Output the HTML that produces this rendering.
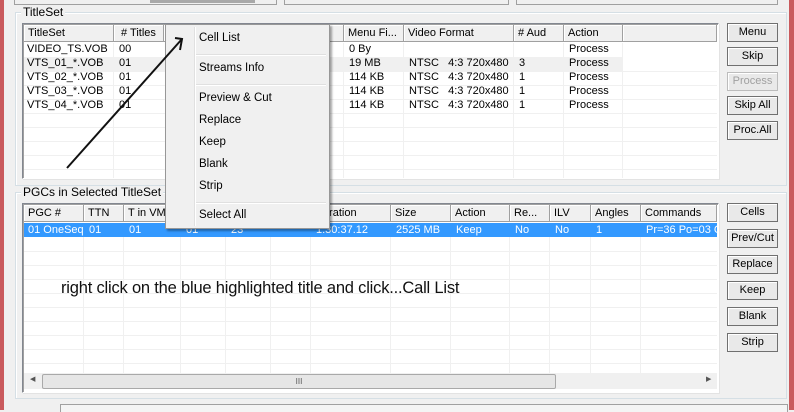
<!DOCTYPE html>
<html><head><style>
*{box-sizing:border-box;margin:0;padding:0}
body{width:794px;height:410px;background:#f0f0f0;font-family:"Liberation Sans",Arial,sans-serif;font-size:11px;color:#000;position:relative;overflow:hidden}
.a{position:absolute}
.grp{position:absolute;border:1px solid #d5dfe5;box-shadow:inset 1px 1px 0 #fff}
.lbl{position:absolute;background:#f0f0f0;padding:0 2px;font-size:12px;line-height:13px;color:#000}
.list{position:absolute;background:#fff;border:1px solid #828790;border-right-color:#fff;border-bottom-color:#fff;box-shadow:inset 1px 1px 0 #a0a0a0, 1px 1px 0 #e3e3e3}
.hd{position:absolute;top:1px;height:17px;border-right:1px solid #a0a0a0;border-bottom:1px solid #a0a0a0;background:#f0f0f0;box-shadow:inset 1px 1px 0 #fff;padding:2px 0 0 4px;white-space:nowrap;overflow:hidden;font-size:11px}
.c{position:absolute;white-space:nowrap;overflow:hidden;padding-left:4px;font-size:11px;height:14px;line-height:14px}
.vl{position:absolute;width:1px;background:#f0f0f0}
.hl{position:absolute;height:1px;background:#f0f0f0}
.btn{position:absolute;left:727px;width:51px;height:19px;border:1px solid #707070;background:#e9e9e9;text-align:center;line-height:17px;font-size:11px;box-shadow:inset 1px 1px 0 #fff}
.menu{position:absolute;left:165px;top:24px;width:165px;height:205px;background:#f0f0f0;border:1px solid #979797;box-shadow:2px 2px 2px rgba(0,0,0,.35)}
.mi{position:absolute;left:33px;font-size:11.5px}
.sep{position:absolute;left:30px;right:3px;height:2px;border-top:1px solid #e0e0e0;border-bottom:1px solid #fff}
</style></head><body>
<div class="a" style="left:0;top:0;width:4px;height:410px;background:#c95a5d"></div>
<div class="a" style="left:789px;top:0;width:5px;height:410px;background:#c95a5d"></div>
<div class="a" style="left:14px;top:0;width:263px;height:5px;border:1px solid #a0a0a0;border-top:none"></div>
<div class="a" style="left:150px;top:0;width:105px;height:3px;background:#a8a8a8"></div>
<div class="a" style="left:284px;top:0;width:225px;height:5px;border:1px solid #a0a0a0;border-top:none"></div>
<div class="a" style="left:516px;top:0;width:262px;height:5px;border:1px solid #a0a0a0;border-top:none"></div>

<div class="grp" style="left:15px;top:12px;width:772px;height:174px"></div>
<div class="lbl" style="left:21px;top:6px">TitleSet</div>
<div class="list" style="left:22px;top:23px;width:697px;height:156px">
 <div class="hd" style="left:1px;width:90px">TitleSet</div>
 <div class="hd" style="left:91px;width:50px">&nbsp;# Titles</div>
 <div class="hd" style="left:141px;width:180px"></div>
 <div class="hd" style="left:321px;width:60px">Menu Fi...</div>
 <div class="hd" style="left:381px;width:110px">Video Format</div>
 <div class="hd" style="left:491px;width:50px"># Aud</div>
 <div class="hd" style="left:541px;width:59px">Action</div>
 <div class="hd" style="left:600px;width:94px"></div>
 <div class="a" style="left:1px;top:33px;width:599px;height:14px;background:#f0f0f0"></div>
 <div class="vl" style="left:90px;top:19px;height:135px"></div>
 <div class="vl" style="left:320px;top:19px;height:135px"></div>
 <div class="vl" style="left:380px;top:19px;height:135px"></div>
 <div class="vl" style="left:490px;top:19px;height:135px"></div>
 <div class="vl" style="left:540px;top:19px;height:135px"></div>
 <div class="vl" style="left:599px;top:19px;height:135px"></div>
 <div class="hl" style="left:1px;top:47px;width:693px"></div>
 <div class="hl" style="left:1px;top:61px;width:693px"></div>
 <div class="hl" style="left:1px;top:75px;width:693px"></div>
 <div class="hl" style="left:1px;top:89px;width:693px"></div>
 <div class="hl" style="left:1px;top:103px;width:693px"></div>
 <div class="hl" style="left:1px;top:117px;width:693px"></div>
 <div class="hl" style="left:1px;top:131px;width:693px"></div>
 <div class="hl" style="left:1px;top:145px;width:693px"></div>
</div>
<div class="a" style="left:27px;top:42px;font-size:11px;line-height:14px">
VIDEO_TS.VOB<br>VTS_01_*.VOB<br>VTS_02_*.VOB<br>VTS_03_*.VOB<br>VTS_04_*.VOB</div>
<div class="a" style="left:119px;top:42px;font-size:11px;line-height:14px">00<br>01<br>01<br>01<br>01</div>
<div class="a" style="left:349px;top:42px;line-height:14px">0 By<br>19 MB<br>114 KB<br>114 KB<br>114 KB</div>
<div class="a" style="left:409px;top:42px;line-height:14px">&nbsp;<br>NTSC &nbsp; 4:3 720x480<br>NTSC &nbsp; 4:3 720x480<br>NTSC &nbsp; 4:3 720x480<br>NTSC &nbsp; 4:3 720x480</div>
<div class="a" style="left:519px;top:42px;line-height:14px">&nbsp;<br>3<br>1<br>1<br>1</div>
<div class="a" style="left:569px;top:42px;line-height:14px">Process<br>Process<br>Process<br>Process<br>Process</div>

<div class="btn" style="top:23px">Menu</div>
<div class="btn" style="top:47px">Skip</div>
<div class="btn" style="top:72px;color:#a0a0a0;border-color:#bcbcbc">Process</div>
<div class="btn" style="top:96px">Skip All</div>
<div class="btn" style="top:121px">Proc.All</div>

<div class="grp" style="left:15px;top:192px;width:772px;height:207px"></div>
<div class="lbl" style="left:21px;top:186px">PGCs in Selected TitleSet</div>
<div class="list" style="left:22px;top:203px;width:697px;height:190px">
 <div class="hd" style="left:1px;width:60px">PGC #</div>
 <div class="hd" style="left:61px;width:40px">TTN</div>
 <div class="hd" style="left:101px;width:57px">T in VM</div>
 <div class="hd" style="left:158px;width:45px"></div>
 <div class="hd" style="left:203px;width:45px"></div>
 <div class="hd" style="left:248px;width:40px"></div>
 <div class="hd" style="left:288px;width:80px">Duration</div>
 <div class="hd" style="left:368px;width:60px">Size</div>
 <div class="hd" style="left:428px;width:59px">Action</div>
 <div class="hd" style="left:487px;width:40px">Re...</div>
 <div class="hd" style="left:527px;width:41px">ILV</div>
 <div class="hd" style="left:568px;width:50px">Angles</div>
 <div class="hd" style="left:618px;width:76px">Commands</div>
 <div class="vl" style="left:60px;top:19px;height:150px"></div>
 <div class="vl" style="left:100px;top:19px;height:150px"></div>
 <div class="vl" style="left:157px;top:19px;height:150px"></div>
 <div class="vl" style="left:202px;top:19px;height:150px"></div>
 <div class="vl" style="left:247px;top:19px;height:150px"></div>
 <div class="vl" style="left:287px;top:19px;height:150px"></div>
 <div class="vl" style="left:367px;top:19px;height:150px"></div>
 <div class="vl" style="left:427px;top:19px;height:150px"></div>
 <div class="vl" style="left:486px;top:19px;height:150px"></div>
 <div class="vl" style="left:526px;top:19px;height:150px"></div>
 <div class="vl" style="left:567px;top:19px;height:150px"></div>
 <div class="vl" style="left:617px;top:19px;height:150px"></div>
 <div class="hl" style="left:1px;top:47px;width:693px"></div>
 <div class="hl" style="left:1px;top:61px;width:693px"></div>
 <div class="hl" style="left:1px;top:75px;width:693px"></div>
 <div class="hl" style="left:1px;top:89px;width:693px"></div>
 <div class="hl" style="left:1px;top:103px;width:693px"></div>
 <div class="hl" style="left:1px;top:117px;width:693px"></div>
 <div class="hl" style="left:1px;top:131px;width:693px"></div>
 <div class="hl" style="left:1px;top:145px;width:693px"></div>
 <div class="hl" style="left:1px;top:159px;width:693px"></div>
 <div class="a" style="left:1px;top:19px;width:693px;height:14px;background:#3399ff;color:#fff">
  <div class="c" style="left:0;width:60px">01 OneSeq</div>
  <div class="c" style="left:61px">01</div>
  <div class="c" style="left:101px">01</div>
  <div class="c" style="left:158px">01</div>
  <div class="c" style="left:203px">23</div>
  <div class="c" style="left:288px">1:30:37.12</div>
  <div class="c" style="left:368px">2525 MB</div>
  <div class="c" style="left:428px">Keep</div>
  <div class="c" style="left:487px">No</div>
  <div class="c" style="left:527px">No</div>
  <div class="c" style="left:568px">1</div>
  <div class="c" style="left:618px;width:76px">Pr=36 Po=03 C</div>
 </div>
 <div class="a" style="left:1px;top:169px;width:693px;height:16px;background:#f0f0f0"></div>
 <div class="a" style="left:19px;top:170px;width:514px;height:15px;background:#e6e6e6;border:1px solid #a9a9a9;border-radius:2px;text-align:center;font-size:8px;line-height:13px;color:#555">III</div>
 <div class="a" style="left:7px;top:171px;font-size:7px;color:#555">&#9664;</div>
 <div class="a" style="left:683px;top:171px;font-size:7px;color:#555">&#9654;</div>
</div>
<div class="a" style="left:61px;top:279px;font-size:16.5px;color:#111;letter-spacing:-0.2px">right click on the blue highlighted title and click...Call List</div>

<div class="btn" style="top:203px">Cells</div>
<div class="btn" style="top:229px">Prev/Cut</div>
<div class="btn" style="top:255px">Replace</div>
<div class="btn" style="top:281px">Keep</div>
<div class="btn" style="top:307px">Blank</div>
<div class="btn" style="top:333px">Strip</div>
<div class="a" style="left:60px;top:404px;width:728px;height:8px;border:1px solid #a0a0a0;border-bottom:none;background:#f4f4f4"></div>

<div class="menu">
 <div class="a" style="left:28px;top:2px;width:1px;height:199px;background:#e0e0e0"></div>
 <div class="a" style="left:29px;top:2px;width:1px;height:199px;background:#fff"></div>
 <div class="mi" style="top:7px">Cell List</div>
 <div class="sep" style="top:29px"></div>
 <div class="mi" style="top:37px">Streams Info</div>
 <div class="sep" style="top:59px"></div>
 <div class="mi" style="top:67px">Preview &amp; Cut</div>
 <div class="mi" style="top:89px">Replace</div>
 <div class="mi" style="top:111px">Keep</div>
 <div class="mi" style="top:133px">Blank</div>
 <div class="mi" style="top:155px">Strip</div>
 <div class="sep" style="top:177px"></div>
 <div class="mi" style="top:184px">Select All</div>
</div>
<svg class="a" style="left:0;top:0" width="794" height="410">
 <line x1="67" y1="168" x2="182" y2="39" stroke="#111" stroke-width="2"/>
 <polyline points="175,38 182,39 180,50" fill="none" stroke="#111" stroke-width="2"/>
</svg>
</body></html>
